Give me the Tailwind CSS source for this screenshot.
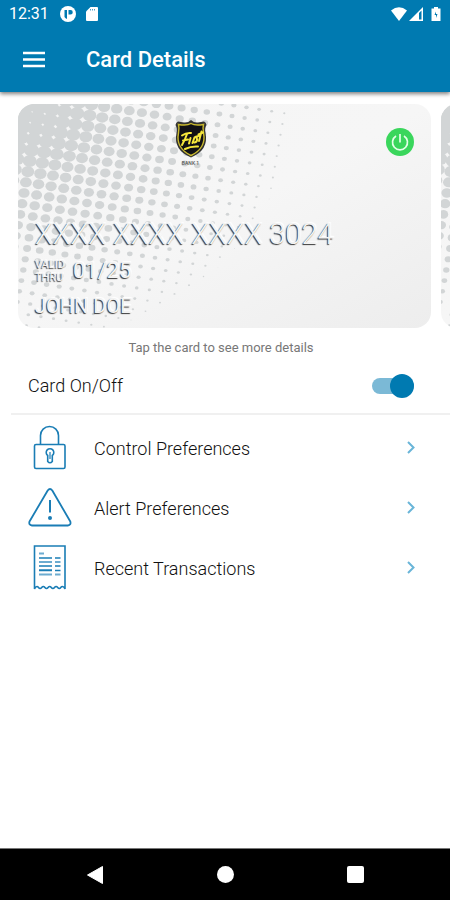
<!DOCTYPE html>
<html lang="en">
<head>
    <meta charset="UTF-8">
    <meta name="viewport" content="width=device-width, initial-scale=1.0">
    <title>Card Details</title>
    <script src="https://cdn.jsdelivr.net/npm/@tailwindcss/browser@4"></script>
</head>
<body class="bg-white min-h-screen flex flex-col font-[Roboto,sans-serif] text-[#111]">

    <!-- Header -->
    <header class="bg-[#007ab1] text-white shadow-[0_2px_4px_rgba(0,0,0,0.5)]">
        <div class="h-7 px-[9px] flex items-center justify-between">
            <div class="flex items-center">
                <span class="w-[51px] text-[16px] leading-7">12:31</span>
                <svg class="w-4 h-4 mr-2.5" viewBox="0 0 16 16">
                    <circle cx="8" cy="8" r="8" fill="#fff"/>
                    <path d="M4.500 4h2.500v9a5 5 0 0 1-2.500-2zM8.500 4H10.500a2.200 2.200 0 0 1 0 4.500H8.500z" fill="#007ab1"/>
                </svg>
                <svg class="w-3 h-4" viewBox="0 0 12 16">
                    <path d="M4.500 1H11q1 0 1 1v12q0 1-1 1H1q-1 0-1-1V5.500z" fill="#fff"/>
                    <path d="M4.500 3v1.500M6.500 3v1.500M8.500 3v1.500" stroke="#4c9fc8" stroke-width="1"/>
                </svg>
            </div>
            <div class="flex items-center">
                <svg class="w-4 h-4 mr-0.5" viewBox="0 0 16 16">
                    <path d="M0 4.500Q8-1.800 16 4.500L8 15z" fill="#fff"/>
                </svg>
                <svg class="w-4 h-4 mr-1.5" viewBox="0 0 16 16">
                    <path d="M0 15L14 1v14z" fill="#fff"/>
                    <path d="M10 7l2.500-2.500v9H10z" fill="#007ab1"/>
                </svg>
                <svg class="w-2.5 h-4" viewBox="0 0 10 16">
                    <path d="M3 1h4v1.500h2.500v12.500h-9V2.500H3z" fill="#fff"/>
                    <path d="M5 5.500L3.500 9H5v3L6.500 8H5z" fill="#007ab1"/>
                </svg>
            </div>
        </div>
        <div class="h-16 px-[22px] flex items-center gap-10">
            <button type="button" aria-label="Menu">
                <svg class="w-6 h-6" viewBox="0 0 24 24">
                    <path d="M1 5h22M1 11.500h22M1 18h22" stroke="#fff" stroke-width="2.600"/>
                </svg>
            </button>
            <h1 class="text-[22px] leading-7 pb-px font-medium">Card Details</h1>
        </div>
    </header>

    <main>
        <!-- Cards -->
        <section class="pt-3 pl-[18px] pr-[19px] flex gap-2.5 overflow-hidden">
            <div class="relative w-full h-56 shrink-0 rounded-2xl overflow-hidden bg-linear-to-br from-[#f5f5f5] via-[#f6f6f6] to-[#ededed]">
                <svg class="dots absolute inset-0 w-full h-full" fill="#d2d5d6"></svg>
                <div class="relative h-full px-[17px] pb-2 flex flex-col justify-end gap-2 text-[#f3f3f3] [text-shadow:-1px_1px_1px_#333,1px_-1px_1px_#fff]">
                    <p class="text-[29px] leading-8 font-light">XXXX XXXX XXXX 3024</p>
                    <div class="flex items-center gap-2">
                        <p class="text-[11px] leading-[13px]">VALID<br>THRU</p>
                        <p class="text-[22px] leading-6">01/25</p>
                    </div>
                    <p class="text-[20px] leading-7">JOHN DOE</p>
                </div>
                <div class="absolute top-4 inset-x-0 pr-[68px] flex flex-col items-center">
                    <svg class="w-9 h-10" viewBox="0 0 36 40">
                        <path d="M18 0Q21 3 25 2.500L31 1.500Q33 2 33.500 5Q31.500 8 32.500 13Q36 30 18 37.500Q0 30 3.500 13Q4.500 8 2.500 5Q3 2 5 1.500L11 2.500Q15 3 18 0z" fill="#333"/>
                        <path d="M18 3.500Q22 6 30.500 4.500Q29.500 8 30.500 13Q33.500 28 18 35.500Q2.500 28 5.500 13Q6.500 8 5.500 4.500Q14 6 18 3.500z" fill="#101014" stroke="#c9b92e" stroke-width="1.400"/>
                        <path d="M9 15.500Q13 12.500 18 13M14 14Q12 20 9 25M10 20.500l5-1M17.500 18L16 23.500M19.500 23L21.500 17.500L23.500 16.500M26.500 15.500Q22.500 16.500 24 19Q24.500 22 21.500 22.500M28.500 11.500L26 21M25.500 14.500L30 12.500M12 29Q18 26 25 26.500" fill="none" stroke="#f5e63c" stroke-width="2" stroke-linecap="round"/>
                    </svg>
                    <span class="text-[5px] leading-[6px] font-medium text-[#555]">BANK 1</span>
                </div>
                <button type="button" aria-label="Card power" class="absolute top-6 right-[17px] w-7 h-7">
                    <svg viewBox="0 0 28 28">
                        <circle cx="14" cy="14" r="14" fill="#3ad65c"/>
                        <path d="M10 8a7.500 7.500 0 1 0 8 0M14 6v8.500" fill="none" stroke="#e4ffe8" stroke-width="1.700"/>
                    </svg>
                </button>
            </div>
            <div class="relative w-full h-56 shrink-0 rounded-2xl overflow-hidden bg-linear-to-br from-[#f5f5f5] via-[#f6f6f6] to-[#ededed]">
                <svg class="dots absolute inset-0 w-full h-full" fill="#d2d5d6"></svg>
            </div>
        </section>

        <p class="pt-2.5 text-center text-[13px] leading-5 text-[#777] pr-2">Tap the card to see more details</p>

        <!-- Card switch -->
        <div class="h-[55px] pl-7 pr-9 flex items-center justify-between">
            <label for="card-switch" class="text-[18px] font-light">Card On/Off</label>
            <span class="relative flex items-center w-[42px] h-6">
                <input type="checkbox" id="card-switch" checked class="peer appearance-none w-full h-4 rounded-full bg-gray-300 checked:bg-[#7bb9d6]">
                <span class="absolute left-0 w-6 h-6 rounded-full bg-gray-500 pointer-events-none peer-checked:left-auto peer-checked:right-0 peer-checked:bg-[#007ab1]"></span>
            </span>
        </div>
        <hr class="ml-[11px] border-t-2 border-[#f0f0f0]">

        <!-- Menu -->
        <nav class="pt-[3px] text-[18px] font-light">
            <a href="#control" class="h-[60px] pl-[26px] pr-[33px] flex items-center gap-5">
                <svg class="w-12 h-12" viewBox="0 0 48 48" fill="none" stroke="#1a7db5" stroke-width="1.600">
                    <rect x="8.500" y="20.500" width="30.500" height="24" rx="1.500"/>
                    <path d="M14.500 20V11.500a9 9 0 0 1 18 0V20"/>
                    <path d="M21.700 31.500a3.800 3.800 0 1 1 4.600 0v6q-2.300 2.600-4.600 0z"/>
                    <path d="M24 28v7" stroke-width="1.200"/>
                </svg>
                <span class="grow">Control Preferences</span>
                <svg class="w-3 h-4" viewBox="0 0 12 16"><path d="M3 2l5.500 5.500-5.500 5.500" fill="none" stroke="#69b5d8" stroke-width="2"/></svg>
            </a>
            <a href="#alert" class="h-[60px] pl-[26px] pr-[33px] flex items-center gap-5">
                <svg class="w-12 h-12" viewBox="0 0 48 48" fill="none" stroke="#1a7db5" stroke-width="1.800">
                    <path d="M21.700 6.500q2.300-3 4.600 0L44.300 37.500q1 3.500-2.500 4H6q-3.500-.5-2.500-4z" stroke-linejoin="round"/>
                    <path d="M24 16v12.500" stroke-width="2"/>
                    <circle cx="24" cy="34" r="2" fill="#1a7db5" stroke="none"/>
                </svg>
                <span class="grow">Alert Preferences</span>
                <svg class="w-3 h-4" viewBox="0 0 12 16"><path d="M3 2l5.500 5.500-5.500 5.500" fill="none" stroke="#69b5d8" stroke-width="2"/></svg>
            </a>
            <a href="#recent" class="h-[60px] pl-[26px] pr-[33px] flex items-center gap-5">
                <svg class="w-12 h-12" viewBox="0 0 48 48" fill="none" stroke="#1a7db5" stroke-width="1.600">
                    <path d="M8.500 45V2h30.500v43q-1-2.500-2.500-2.500c-2 0-1.500 2-3.200 2s-1.500-2-3.200-2-1.500 2-3.200 2-1.500-2-3.200-2-1.500 2-3.200 2-1.500-2-3.200-2-1.500 2-3.200 2-1.500-2-3.100-2q-1.500 0-2.500 2.500z"/>
                    <path d="M13 9.500h5M13 18h13M13 26h13M13 30.500h13M29 18h5.500M29 30.500h5.500" stroke="#6dacd0" stroke-width="1.800"/>
                    <path d="M13 14h13M13 22h13M13 26.500h13M29 14h5.500M29 22h5.500M29 26.500h5.500" stroke-width="1.600"/>
                </svg>
                <span class="grow">Recent Transactions</span>
                <svg class="w-3 h-4" viewBox="0 0 12 16"><path d="M3 2l5.500 5.500-5.500 5.500" fill="none" stroke="#69b5d8" stroke-width="2"/></svg>
            </a>
        </nav>
    </main>

    <!-- System navigation -->
    <footer class="mt-auto h-[52px] bg-black border-t border-[#777] px-[30px] grid grid-cols-3 items-center justify-items-center">
        <button type="button" aria-label="Back">
            <svg class="w-[18px] h-[18px]" viewBox="0 0 18 18"><path d="M1.500 9L16.500 .5v17z" fill="#fff" stroke="#fff" stroke-linejoin="round"/></svg>
        </button>
        <button type="button" aria-label="Home" class="w-[17px] h-[17px] rounded-full bg-white"></button>
        <button type="button" aria-label="Recents" class="w-[17px] h-[17px] rounded-xs bg-white"></button>
    </footer>

    <script>
        // halftone background: dots on a tilted grid that shrink away from the top left corner
        const sizes = [[0, 9], [60, 7.3], [90, 5.9], [150, 4.5], [190, 3.2], [240, 1.9], [270, 1], [276, 0]];

        function dotSize(d) {
            for (let i = 1; i < sizes.length; i++) {
                const [d0, r0] = sizes[i - 1];
                const [d1, r1] = sizes[i];
                if (d < d1) return r0 + (r1 - r0) * (d - d0) / (d1 - d0);
            }
            return 0;
        }

        document.querySelectorAll(".dots").forEach((svg) => {
            for (let i = -24; i < 12; i++) {
                for (let j = -6; j < 30; j++) {
                    const x = 214 + i * 12.6 - j * 1.9;
                    const y = 12 + i * 2 + j * 10.7;
                    if (x < -9 || y < -9 || y > 233) continue;
                    const r = dotSize(Math.hypot(x, y * 1.15));
                    if (r <= 0) continue;
                    const dot = document.createElementNS("http://www.w3.org/2000/svg", "ellipse");
                    dot.setAttribute("cx", x);
                    dot.setAttribute("cy", y);
                    dot.setAttribute("rx", r);
                    dot.setAttribute("ry", r * 0.86);
                    svg.appendChild(dot);
                }
            }
        });
    </script>
</body>
</html>
